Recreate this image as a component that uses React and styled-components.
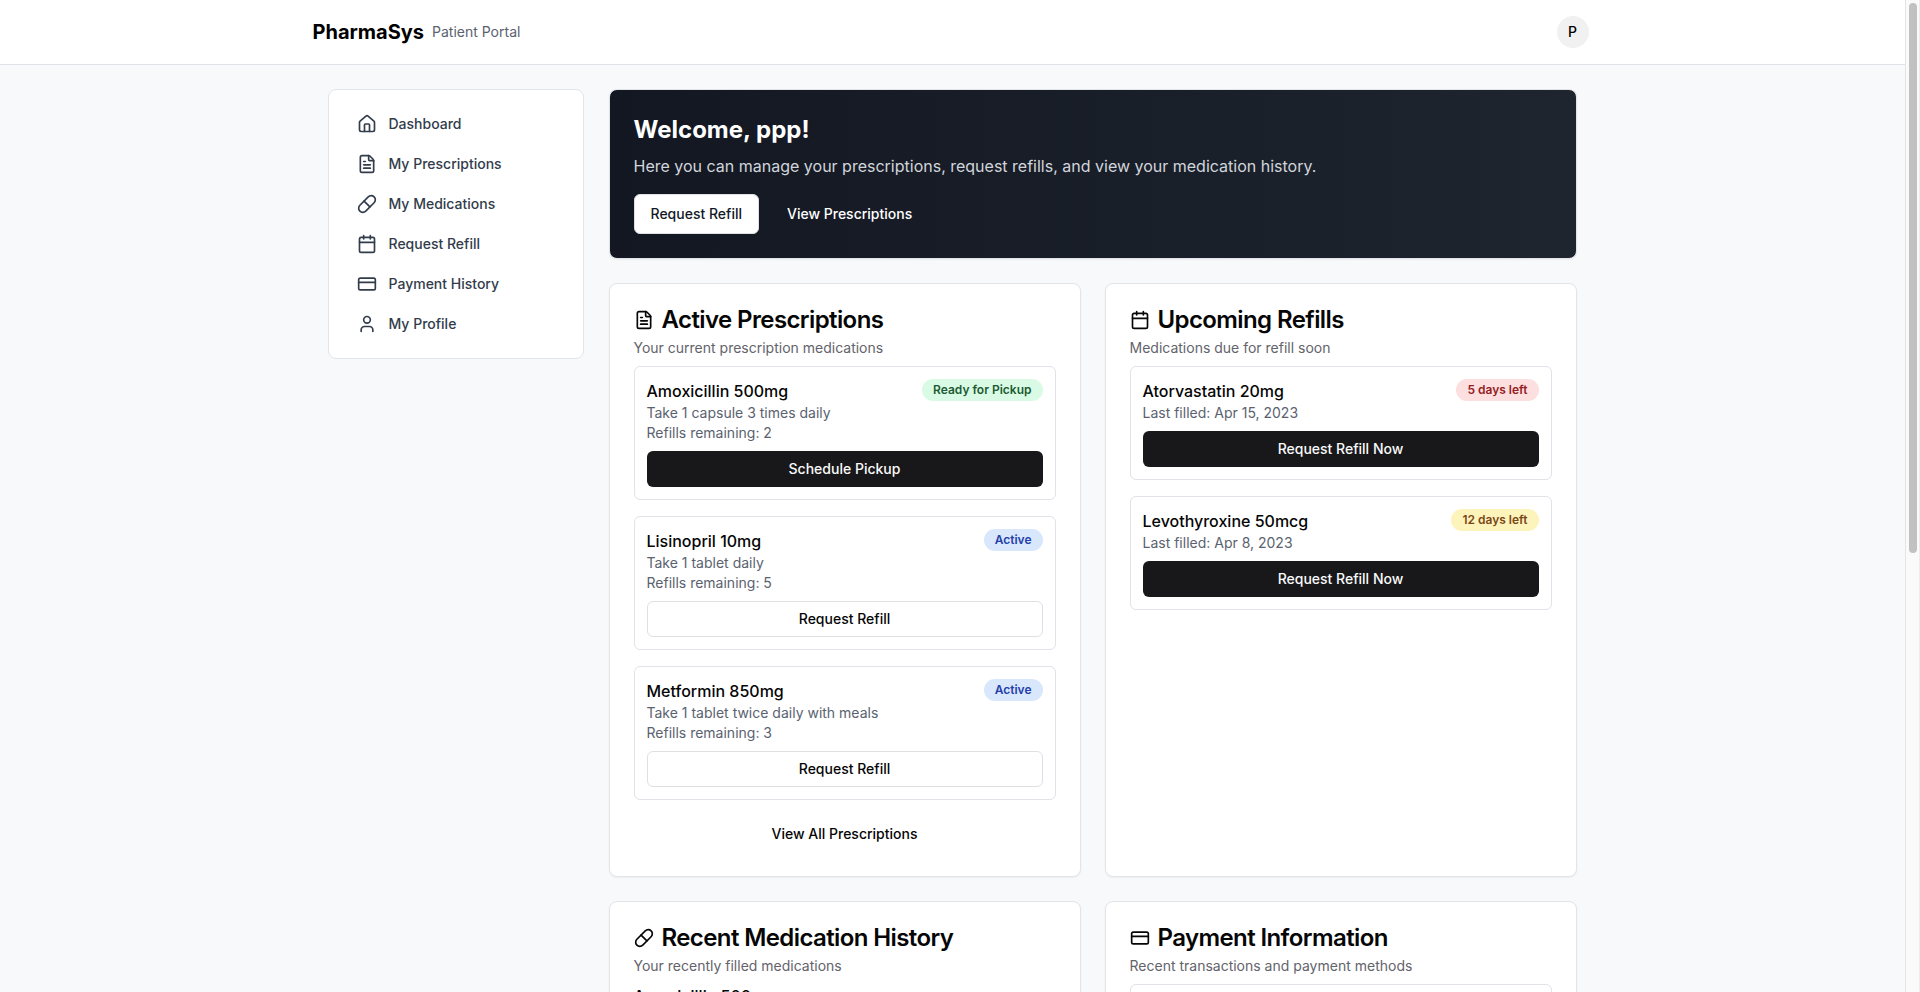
import React from 'react';
import styled, { createGlobalStyle, css } from 'styled-components';
import { House, FileText, Pill, Calendar, CreditCard, User } from 'lucide-react';

const GlobalStyle = createGlobalStyle`
  *, *::before, *::after { box-sizing: border-box; }
  body {
    margin: 0;
    overflow: hidden;
    font-family: Inter, "Liberation Sans", sans-serif;
    font-size: 16px;
    line-height: 24px;
    color: #060606;
    -webkit-font-smoothing: antialiased;
  }
  h1, h2, h3, p { margin: 0; }
  button { font-family: inherit; cursor: pointer; }
`;

const Window = styled.div`
  display: flex;
  height: 992px;
  overflow: hidden;
  background: #f8f9fb;
`;

const Page = styled.div`
  flex: 1;
  min-width: 0;
  height: 100%;
  overflow: hidden;
`;

const ScrollTrack = styled.div`
  flex: none;
  width: 15px;
  padding: 3px 2px 0 3px;
  background: #fafafa;
  border-left: 1px solid #e4e4e6;
  border-right: 1px solid #ececec;
`;

const ScrollThumb = styled.div`
  width: 8px;
  height: 550px;
  border-radius: 4px;
  background: #c1c1c1;
`;

const Header = styled.header`
  height: 65px;
  background: #fff;
  border-bottom: 1px solid #dfe2e8;
`;

const HeaderInner = styled.div`
  display: flex;
  align-items: center;
  justify-content: space-between;
  max-width: 1280px;
  height: 64px;
  margin: 0 auto;
  padding-right: 4px;
`;

const Brand = styled.div`
  display: flex;
  align-items: center;
  gap: 8px;
`;

const BrandName = styled.h1`
  font-size: 20px;
  line-height: 28px;
  font-weight: 700;
  color: #000;
`;

const BrandSub = styled.span`
  font-size: 14px;
  line-height: 20px;
  color: #5a6270;
`;

const Avatar = styled.div`
  display: flex;
  align-items: center;
  justify-content: center;
  width: 32px;
  height: 32px;
  border-radius: 50%;
  background: #f1f1f2;
  color: #000;
  font-size: 14px;
  font-weight: 500;
`;

const Main = styled.main`
  display: flex;
  align-items: flex-start;
  gap: 25px;
  max-width: 1280px;
  margin: 0 auto;
  padding: 24px 16px 24px 15px;
`;

const panel = css`
  border: 1px solid #e1e4e9;
  border-radius: 8px;
  box-shadow: 0 1px 2px rgba(0, 0, 0, 0.05);
`;

const Sidebar = styled.nav`
  ${panel}
  display: flex;
  flex-direction: column;
  gap: 4px;
  flex: none;
  width: 256px;
  padding: 16px;
  background: #fff;
  box-shadow: none;
`;

const NavItem = styled.a`
  display: flex;
  align-items: center;
  gap: 12px;
  height: 36px;
  padding: 0 12px;
  border-radius: 6px;
  color: #323c4b;
  font-size: 14px;
  line-height: 20px;
  font-weight: 500;
`;

const Content = styled.div`
  display: flex;
  flex-direction: column;
  gap: 24px;
  flex: 1;
  min-width: 0;
`;

const Banner = styled.section`
  ${panel}
  padding: 24px;
  background: linear-gradient(to right, #131722, #1e252f);
  color: #fff;
`;

const BannerTitle = styled.h2`
  font-size: 24px;
  line-height: 32px;
  font-weight: 700;
`;

const BannerText = styled.p`
  margin-top: 8px;
  color: #d1d5db;
`;

const BannerActions = styled.div`
  display: flex;
  gap: 12px;
  margin-top: 16px;
`;

const buttonKinds = {
  solid: css`
    background: #18181b;
    color: #fafafa;
  `,
  outline: css`
    background: #fff;
    border: 1px solid #e0e0e4;
    color: #060606;
  `,
  light: css`
    background: #fff;
    border: 1px solid #e0e0e4;
    color: #111827;
  `,
  ghost: css`
    background: transparent;
    color: inherit;
  `,
};

const Button = styled.button`
  display: flex;
  align-items: center;
  justify-content: center;
  width: ${(p) => (p.$block ? '100%' : 'auto')};
  height: ${(p) => (p.$small ? 36 : 40)}px;
  padding: 0 16px;
  border: 0;
  border-radius: 6px;
  font-size: 14px;
  line-height: 20px;
  font-weight: 500;
  ${(p) => buttonKinds[p.$kind]}
`;

const CardGrid = styled.div`
  display: grid;
  grid-template-columns: 1fr 1fr;
  gap: 24px;
`;

const CardBox = styled.section`
  ${panel}
  padding: 24px;
  background: #fff;
`;

const CardHeader = styled.div`
  display: flex;
  flex-direction: column;
  gap: 6px;
  padding-bottom: 8px;
`;

const CardTitle = styled.h3`
  display: flex;
  align-items: center;
  gap: 8px;
  font-size: 24px;
  line-height: 24px;
  font-weight: 600;
  letter-spacing: -0.025em;
`;

const CardDescription = styled.p`
  font-size: 14px;
  line-height: 20px;
  color: #63636b;
`;

const List = styled.div`
  display: flex;
  flex-direction: column;
  gap: 16px;
`;

const Item = styled.article`
  display: flex;
  flex-direction: column;
  gap: 8px;
  padding: 12px;
  border: 1px solid #e1e3e8;
  border-radius: 6px;
`;

const ItemTop = styled.div`
  display: flex;
  align-items: flex-start;
  justify-content: space-between;
`;

const ItemName = styled.p`
  font-weight: 500;
`;

const ItemDetail = styled.p`
  font-size: 14px;
  line-height: 20px;
  color: #5a6270;
`;

const badgeTones = {
  green: css`background: #d9fbe5; color: #1c5a33;`,
  blue: css`background: #d8e7fc; color: #2540a8;`,
  red: css`background: #fddfdf; color: #94201f;`,
  yellow: css`background: #fcf4bb; color: #7c4717;`,
};

const Badge = styled.span`
  flex: none;
  padding: 3px 11px;
  border-radius: 11px;
  font-size: 12px;
  line-height: 16px;
  font-weight: 600;
  ${(p) => badgeTones[p.$tone]}
`;

const navItems = [
  [House, 'Dashboard'],
  [FileText, 'My Prescriptions'],
  [Pill, 'My Medications'],
  [Calendar, 'Request Refill'],
  [CreditCard, 'Payment History'],
  [User, 'My Profile'],
];

const prescriptions = [
  { name: 'Amoxicillin 500mg', details: ['Take 1 capsule 3 times daily', 'Refills remaining: 2'], badge: 'Ready for Pickup', tone: 'green', action: 'Schedule Pickup', kind: 'solid' },
  { name: 'Lisinopril 10mg', details: ['Take 1 tablet daily', 'Refills remaining: 5'], badge: 'Active', tone: 'blue', action: 'Request Refill', kind: 'outline' },
  { name: 'Metformin 850mg', details: ['Take 1 tablet twice daily with meals', 'Refills remaining: 3'], badge: 'Active', tone: 'blue', action: 'Request Refill', kind: 'outline' },
];

const refills = [
  { name: 'Atorvastatin 20mg', details: ['Last filled: Apr 15, 2023'], badge: '5 days left', tone: 'red', action: 'Request Refill Now', kind: 'solid' },
  { name: 'Levothyroxine 50mcg', details: ['Last filled: Apr 8, 2023'], badge: '12 days left', tone: 'yellow', action: 'Request Refill Now', kind: 'solid' },
];

function Card({ icon: Icon, title, description, children }) {
  return (
    <CardBox>
      <CardHeader>
        <CardTitle>
          <Icon size={20} />
          {title}
        </CardTitle>
        <CardDescription>{description}</CardDescription>
      </CardHeader>
      <List>{children}</List>
    </CardBox>
  );
}

function MedicationItem({ item }) {
  return (
    <Item>
      <ItemTop>
        <div>
          <ItemName>{item.name}</ItemName>
          {item.details.map((d) => (
            <ItemDetail key={d}>{d}</ItemDetail>
          ))}
        </div>
        <Badge $tone={item.tone}>{item.badge}</Badge>
      </ItemTop>
      <Button $kind={item.kind} $small $block>{item.action}</Button>
    </Item>
  );
}

export default function App() {
  return (
    <Window>
      <GlobalStyle />
      <Page>
        <Header>
          <HeaderInner>
            <Brand>
              <BrandName>PharmaSys</BrandName>
              <BrandSub>Patient Portal</BrandSub>
            </Brand>
            <Avatar>P</Avatar>
          </HeaderInner>
        </Header>
        <Main>
          <Sidebar>
            {navItems.map(([Icon, label]) => (
              <NavItem key={label}>
                <Icon size={20} />
                {label}
              </NavItem>
            ))}
          </Sidebar>
          <Content>
            <Banner>
              <BannerTitle>Welcome, ppp!</BannerTitle>
              <BannerText>
                Here you can manage your prescriptions, request refills, and view your medication history.
              </BannerText>
              <BannerActions>
                <Button $kind="light">Request Refill</Button>
                <Button $kind="ghost">View Prescriptions</Button>
              </BannerActions>
            </Banner>
            <CardGrid>
              <Card icon={FileText} title="Active Prescriptions" description="Your current prescription medications">
                {prescriptions.map((item) => (
                  <MedicationItem key={item.name} item={item} />
                ))}
                <Button $kind="ghost" $small $block>View All Prescriptions</Button>
              </Card>
              <Card icon={Calendar} title="Upcoming Refills" description="Medications due for refill soon">
                {refills.map((item) => (
                  <MedicationItem key={item.name} item={item} />
                ))}
              </Card>
              <Card icon={Pill} title="Recent Medication History" description="Your recently filled medications">
                <ItemName>Amoxicillin 500mg</ItemName>
              </Card>
              <Card icon={CreditCard} title="Payment Information" description="Recent transactions and payment methods">
                <Item />
              </Card>
            </CardGrid>
          </Content>
        </Main>
      </Page>
      <ScrollTrack>
        <ScrollThumb />
      </ScrollTrack>
    </Window>
  );
}
